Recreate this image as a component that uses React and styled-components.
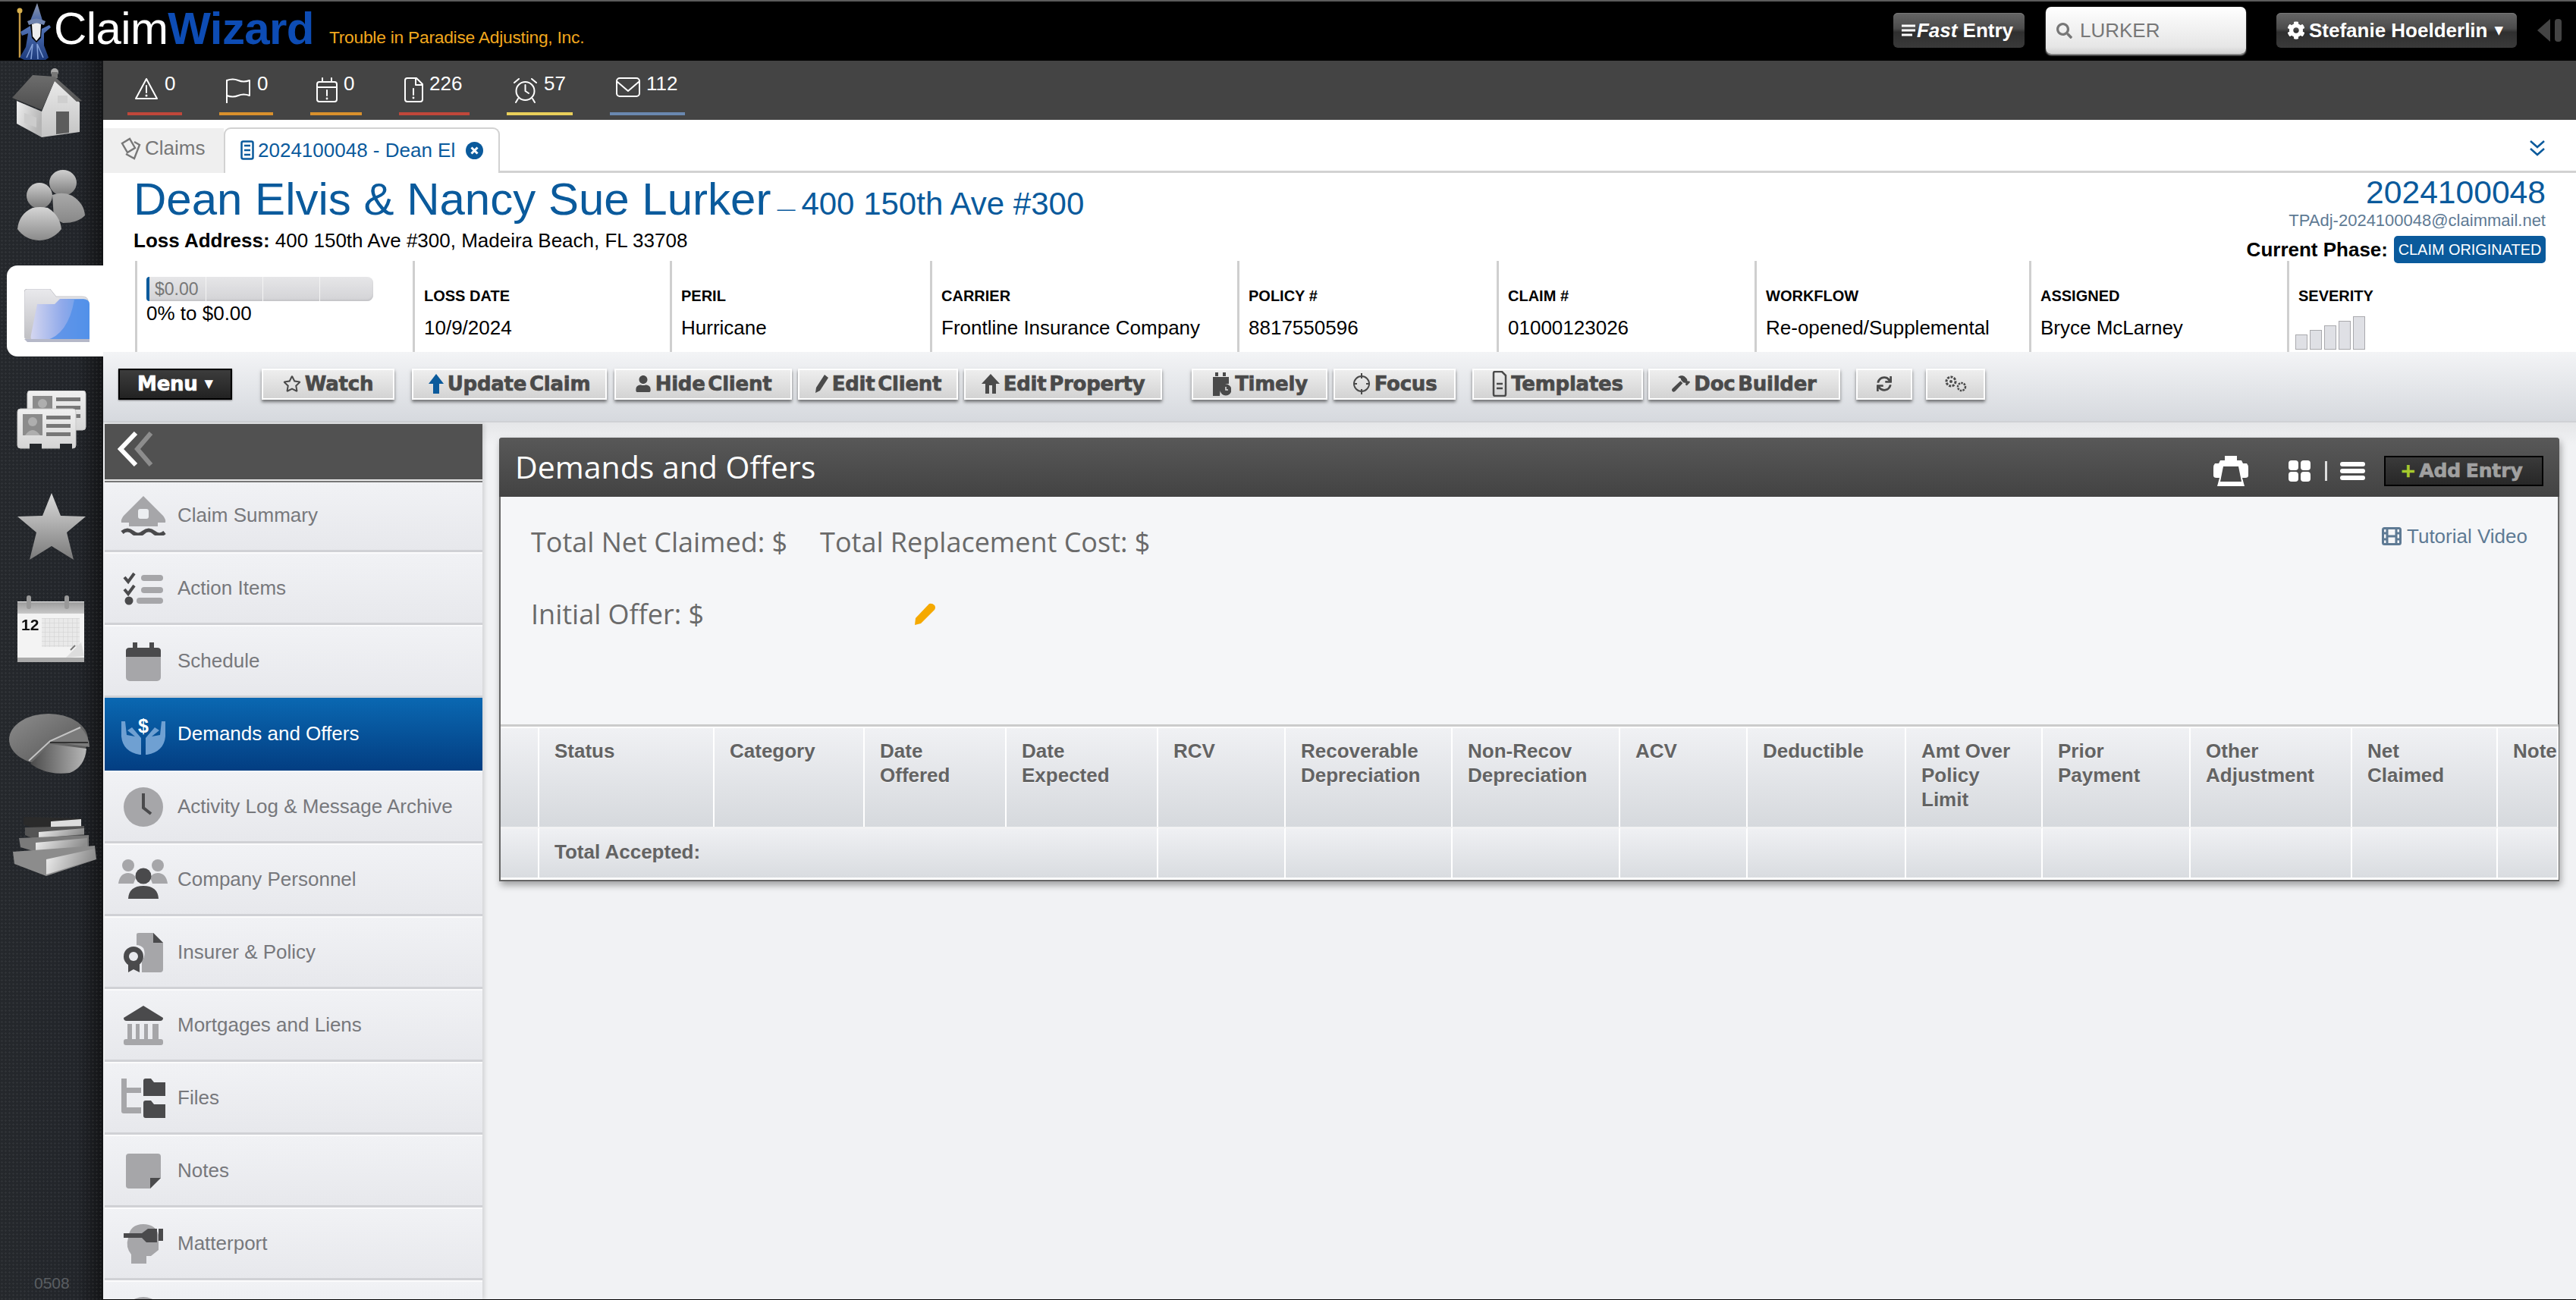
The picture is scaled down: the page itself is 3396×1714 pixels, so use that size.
import React from 'react';
import styled, { createGlobalStyle } from 'styled-components';
import { FaCog, FaSearch, FaRegStar, FaUser, FaHammer, FaSync } from 'react-icons/fa';

const Global = createGlobalStyle`
  html, body { margin: 0; padding: 0; width: 3396px; height: 1714px; overflow: hidden; background: #f2f3f5; }
  * { box-sizing: border-box; }
  #root { font-family: "Liberation Sans", Arial, sans-serif; font-size: 26px; }
`;

const Page = styled.div`display:flex;flex-direction:column;width:3396px;height:1714px;overflow:hidden;`;
const TopBar = styled.header`
  height:80px;background:#000;border-top:2px solid #5c5c5c;display:flex;align-items:center;flex:none;padding-right:18px;
`;
const LogoFigure = styled.div`display:flex;margin-left:22px;margin-top:2px;`;
const LogoText = styled.div`font-size:60px;letter-spacing:-.6px;color:#fff;margin-left:3px;line-height:60px;margin-top:-7px;`;
const LogoBlue = styled.b`color:#0d4cb4;`;
const Company = styled.div`font-size:22.8px;color:#f2a81e;margin-left:20px;margin-top:16px;flex:1;letter-spacing:-.25px;`;
const DarkButton = styled.div`
  display:flex;align-items:center;justify-content:center;gap:${p=>p.$gap ?? 5}px;height:46px;width:${p=>p.$w}px;margin-top:-2px;padding-right:${p=>p.$pr||0}px;
  border-radius:6px;color:#fff;font-weight:700;font-size:26px;
  background:linear-gradient(#666 0%,#4b4b4b 45%,#2f2f2f 55%,#3a3a3a 100%);box-shadow:inset 0 1px 0 #777;
`;
const SearchBox = styled.div`
  display:flex;align-items:center;gap:10px;width:264px;height:62px;margin:-2px 40px 0 28px;padding-left:14px;border-radius:7px;
  background:linear-gradient(#fff,#e6e6e6 85%,#cfcfcf);color:#777;font-size:26px;box-shadow:0 2px 2px #999;
`;
const CollapseGrip = styled.div`display:flex;margin-left:27px;margin-top:-2px;`;
const FastWord = styled.i`font-weight:700;`;

const Body = styled.div`flex:1;display:flex;min-height:0;`;
const Rail = styled.nav`
  width:136px;flex:none;display:flex;flex-direction:column;position:relative;
  background-color:#22262a;
  background-image:radial-gradient(rgba(255,255,255,.055) 1px,transparent 1.4px),linear-gradient(90deg,#25282c 0%,#22252a 75%,#131416 100%);
  background-size:5px 5px,100% 100%;
`;
const RailIcon = styled.div`display:flex;margin-top:${p=>p.$top}px;margin-left:${p=>p.$left}px;filter:blur(.5px);`;
const RailActive = styled.div`
  margin-top:33px;margin-left:9px;width:127px;height:120px;background:#fff;border-radius:14px 0 0 14px;padding:31px 0 0 23px;display:flex;align-items:flex-start;
`;
const RailVersion = styled.div`margin-top:auto;padding:0 0 10px 45px;font-size:21px;color:#5a5e62;`;

const Main = styled.main`flex:1;display:flex;flex-direction:column;min-width:0;border-bottom:1px solid #000;`;
const NotifBar = styled.div`height:78px;flex:none;background:#444;display:flex;gap:49px;padding:18px 0 0 32px;`;
const NotifItem = styled.div`
  height:54px;width:${p=>p.$w}px;border-bottom:4px solid ${p=>p.$c};display:flex;align-items:flex-start;padding-left:${p=>p.$pad}px;gap:8px;color:#fff;font-size:26px;line-height:30px;
`;
const NotifIcon = styled.span`display:flex;margin-top:4px;`;
const NotifCount = styled.span`margin-top:-3px;`;
const TabBar = styled.div`height:70px;flex:none;background:#fff;border-bottom:3px solid #d2d2d2;display:flex;align-items:flex-end;position:relative;`;
const TabClaims = styled.div`
  width:159px;height:59px;background:#efefef;display:flex;align-items:center;gap:5px;padding:0 0 6px 22px;color:#777;font-size:26px;margin-bottom:-3px;
`;
const TabActive = styled.div`
  width:364px;height:60px;margin-bottom:-3px;background:#fff;border:2px solid #d2d2d2;border-bottom:none;border-radius:9px 9px 0 0;display:flex;align-items:center;padding:0 0 2px 20px;gap:5px;color:#0a5a9c;font-size:26px;
`;
const TabClose = styled.span`display:flex;margin-left:9px;`;
const TabMore = styled.span`position:absolute;right:40px;top:26px;display:flex;`;

const Header = styled.section`flex:none;height:236px;background:#fff;display:flex;flex-direction:column;position:relative;z-index:2;`;
const HeaderTop = styled.div`height:116px;display:flex;justify-content:space-between;padding:0 40px 0 40px;`;
const NameLine = styled.div`display:flex;align-items:baseline;color:#0a5a9c;margin-top:6px;line-height:58px;`;
const ClaimName = styled.span`font-size:60px;`;
const SubDash = styled.span`font-size:24px;margin-left:8px;`;
const Sub = styled.span`font-size:42px;margin-left:8px;`;
const LossLine = styled.div`font-size:26px;color:#000;margin-top:-3px;line-height:32px;`;
const ClaimSide = styled.div`text-align:right;display:flex;flex-direction:column;align-items:flex-end;`;
const ClaimNo = styled.div`font-size:42.6px;color:#0a5a9c;line-height:42px;margin-top:4px;`;
const ClaimMail = styled.div`font-size:22px;color:#5e7a94;line-height:28px;margin-top:3px;`;
const PhaseLine = styled.div`display:flex;align-items:center;gap:8px;font-size:26px;font-weight:700;margin-top:6px;`;
const PhaseBadge = styled.span`
  width:200px;height:36px;background:#0a5a9c;border-radius:5px;color:#fff;font-size:19.9px;font-weight:400;display:flex;align-items:center;justify-content:center;white-space:nowrap;
`;
const InfoRow = styled.div`height:124px;margin-left:42px;display:flex;`;
const InfoCell = styled.div`
  width:${p=>p.$w}px;border-left:3px solid #cfcfcf;padding:${p=>p.$pt ?? 34}px 0 0 12px;flex:none;
`;
const InfoLabel = styled.div`font-size:20px;font-weight:700;line-height:24px;color:#000;`;
const InfoValue = styled.div`font-size:26px;line-height:32px;margin-top:14px;color:#000;`;
const Progress = styled.div`
  width:299px;height:32px;display:flex;border-left:4px solid #0a5a9c;border-radius:4px 8px 8px 4px;overflow:hidden;
  background:linear-gradient(#e6e6e8,#d3d3d6);box-shadow:inset 0 -2px 2px #c5c5c8;
`;
const ProgressSeg = styled.div`width:75px;flex:none;border-right:1px solid #f4f4f4;color:#777;font-size:23px;padding-left:7px;line-height:32px;`;
const ProgressText = styled.div`font-size:26px;line-height:30px;margin-top:1px;`;
const SeverityBars = styled.div`display:flex;align-items:flex-end;gap:3px;margin:15px 0 0 -4px;`;
const SeverityBar = styled.span`width:16px;height:${p=>p.$h}px;background:#dfe0e5;border:1px solid #a9a9ad;`;

const Toolbar = styled.div`
  height:93px;flex:none;display:flex;align-items:flex-start;padding:22px 0 0 20px;
  background:linear-gradient(#f3f4f6,#d6d9de);border-bottom:2px solid #cfd1d5;
`;
const ToolButton = styled.div`
  width:${p=>p.$w}px;height:41px;margin-left:${p=>p.$gap||0}px;display:flex;align-items:center;justify-content:center;gap:5px;padding-bottom:2px;
  background:linear-gradient(#eeeeee,#d3d3d3);border:2px solid #fff;box-shadow:0 3px 4px rgba(0,0,0,.5);
  color:#4a4a4a;font-family:"DejaVu Sans",sans-serif;font-weight:700;font-size:26px;-webkit-text-stroke:.7px currentColor;word-spacing:-5px;letter-spacing:-.25px;white-space:nowrap;
`;
const MenuButton = styled(ToolButton)`background:linear-gradient(#3c3c3c,#222);border:2px solid #000;color:#fff;box-shadow:0 1px 2px rgba(0,0,0,.5);`;
const Caret = styled.span`font-size:15px;margin-left:4px;font-family:"DejaVu Sans",sans-serif;-webkit-text-stroke:0;`;

const Content = styled.div`flex:1;display:flex;min-height:0;background:linear-gradient(#e5e6e8 0,#f1f2f4 30px);`;
const SideNav = styled.aside`
  width:498px;margin:2px 0 0 2px;flex:none;display:flex;flex-direction:column;overflow:hidden;box-shadow:3px 0 5px rgba(0,0,0,.12);
`;
const SideHead = styled.div`height:73px;flex:none;background:#515151;position:relative;z-index:1;box-shadow:0 2px 0 #e8e8e8,0 4px 0 #777;display:flex;align-items:flex-start;padding:10px 0 0 17px;`;
const SideRow = styled.div`
  height:96px;flex:none;display:flex;align-items:center;gap:9px;padding-left:15px;font-size:26px;
  color:${p=>p.$on?'#fff':'#77787c'};
  background:${p=>p.$on?'linear-gradient(#0a67b1,#033f83)':'linear-gradient(#f1f2f5,#e7e8ec)'};
  border-top:2px solid ${p=>p.$on?'#0a67b1':'#fbfbfc'};border-bottom:3px solid ${p=>p.$on?'#033f83':'#d0d1d5'};
`;
const SideIcon = styled.span`width:72px;flex:none;display:flex;justify-content:center;`;

const PanelArea = styled.div`flex:1;padding:20px 22px 0 22px;min-width:0;`;
const Panel = styled.section`
  border:2px solid #666;border-top:none;border-radius:4px 4px 0 0;box-shadow:2px 5px 10px rgba(0,0,0,.35);background:#f5f6f8;
`;
const PanelHead = styled.div`
  height:78px;margin:0 -2px;background:linear-gradient(#585858,#434343);border-radius:4px 4px 0 0;display:flex;align-items:center;padding:0 21px 0 21px;color:#fff;
`;
const PanelTitle = styled.h1`margin:-3px 0 0;flex:1;font:400 41px "Open Sans",sans-serif;`;
const HeadTools = styled.div`display:flex;align-items:center;margin-top:10px;`;
const ToolSlot = styled.span`display:flex;margin-left:${p=>p.$gap}px;`;
const AddEntry = styled.div`
  width:210px;height:40px;margin-left:25px;background:linear-gradient(#3a3a3a,#272727);border:2px solid #000;display:flex;align-items:center;justify-content:center;gap:4px;padding:0 6px 2px 0;
  color:#a0a0a0;font-family:"DejaVu Sans",sans-serif;font-weight:700;font-size:25px;-webkit-text-stroke:.7px currentColor;word-spacing:-2px;letter-spacing:-.1px;
`;
const Plus = styled.span`color:#a6ca2e;`;
const Summary = styled.div`height:300px;display:flex;justify-content:space-between;padding:12px 40px 0 40px;`;
const SummaryRow = styled.div`display:flex;align-items:center;height:95px;color:#6a6a6a;font:400 36px "Open Sans",sans-serif;gap:${p=>p.$gap||0}px;`;
const PencilSlot = styled.span`display:flex;margin-left:277px;`;
const Tutorial = styled.div`display:flex;align-items:center;gap:7px;color:#5e7a94;font-size:26px;height:30px;margin-top:25px;`;
const GridTable = styled.table`
  width:2713px;margin-left:0;table-layout:fixed;border-collapse:separate;border-spacing:0;border-top:3px solid #cbcbcb;
`;
const HeadCell = styled.th`
  height:132px;vertical-align:top;text-align:left;padding:14px 4px 0 20px;font-size:26px;line-height:32px;font-weight:700;color:#636363;overflow:hidden;white-space:nowrap;
  background:linear-gradient(#f0f1f4,#d6d9dd);border-top:2px solid #fff;border-right:2px solid #fff;text-shadow:0 1px 1px rgba(255,255,255,.7);
`;
const TotalCell = styled.td`
  height:70px;padding:0 0 4px 20px;font-size:26px;font-weight:700;color:#636363;
  background:linear-gradient(#eff0f3,#d9dce0);border-top:3px solid #f2f2f3;border-right:2px solid #fff;border-bottom:3px solid #fff;
`;

const g = (id, a, b, x2 = 0, y2 = 1) => (
  <linearGradient id={id} x1="0" y1="0" x2={x2} y2={y2}><stop offset="0" stopColor={a}/><stop offset="1" stopColor={b}/></linearGradient>
);

const Wizard = () => (
  <svg width="46" height="76" viewBox="0 0 46 76">
    <defs>{g('wz','#5576b8','#1c3a7c')}{g('wh','#8e98ac','#4d6aa8')}</defs>
    <path d="M4 12 L4 72" stroke="#c59a44" strokeWidth="2.5"/><circle cx="4" cy="10" r="3.5" fill="#d8b04c"/>
    <path d="M27 0 L18 23 L34 23 Z" fill="url(#wh)"/>
    <path d="M14 24 Q26 17 38 24 L36 29 Q26 25 16 29Z" fill="#6f83ad"/>
    <path d="M20 28 Q27 25 32 28 L31 44 L26 50 L21 44Z" fill="#eeeeee"/>
    <path d="M18 30 L5 38 L7 43 L15 40 L12 58 L4 72 L10 75 L38 75 L42 72 L36 56 L36 40 L45 32 L43 29 L33 34 L32 46 L26 52 L20 46Z" fill="url(#wz)"/>
    <path d="M13 72 L21 54 L19 74 M28 74 L27 54 L35 72" stroke="#86a3da" strokeWidth="1.5" fill="none"/>
  </svg>
);

const House = () => (
  <svg width="93" height="91" viewBox="0 0 93 91">
    <defs>{g('hw','#f0f0f0','#b5b5b5',1,.4)}{g('hg','#e9e9e9','#c4c4c4')}{g('hr','#6d6d6d','#4e4e4e')}</defs>
    <circle cx="57" cy="5" r="5" fill="#a8a8a8"/><rect x="53" y="5" width="8" height="8" fill="#777"/>
    <path d="M7 43 L40 57 L40 91 L7 73Z" fill="url(#hw)"/>
    <path d="M40 57 L57 16 L90 45 L90 84 L40 91Z" fill="url(#hg)"/>
    <path d="M1 39 L28 9 L57 11 L93 43 L86 44 L57 17 L40 55Z" fill="url(#hr)"/>
    <path d="M59 57 H76 V85 L59 87Z" fill="#5c5c5c"/>
    <path d="M17 59 L33 65 V78 L17 72Z" fill="#ccc"/>
    <path d="M61 36 L74 36 L74 46 L61 46Z" fill="#cfcfcf"/>
  </svg>
);
const People = () => (
  <svg width="89" height="93" viewBox="0 0 89 93">
    <defs>{g('pa','#cfcfcf','#7a7a7a')}{g('pb','#a9a9a9','#888')}{g('pc','#d5d5d5','#8a8a8a')}</defs>
    <ellipse cx="60" cy="17" rx="18" ry="17" fill="url(#pa)"/>
    <path d="M46 33 Q60 28 72 34 Q88 44 89 60 Q80 70 60 70 L48 64Z" fill="url(#pb)"/>
    <ellipse cx="29" cy="34" rx="17" ry="17" fill="url(#pa)"/>
    <path d="M0 78 Q2 58 20 50 Q30 48 40 50 Q56 60 58 78 Q46 93 28 93 Q10 92 0 78Z" fill="url(#pc)"/>
  </svg>
);
const Folder = () => (
  <svg width="86" height="70" viewBox="0 0 86 70">
    <defs>{g('fb','#e9e9ec','#c0c0c4')}
      <linearGradient id="ff" x1="0" y1="0" x2="1" y2="0"><stop offset="0" stopColor="#d4d6f0"/><stop offset=".55" stopColor="#8fa9ea"/><stop offset="1" stopColor="#5c9bea"/></linearGradient></defs>
    <path d="M0 4 Q0 0 4 0 H34 L42 10 H76 Q84 10 84 16 V66 H4 Q0 66 0 62Z" fill="url(#fb)" stroke="#c6c6cb"/>
    <path d="M17 20 H40 L47 13 H78 Q86 14 86 20 V68 H14 Q7 68 9 60Z" fill="url(#ff)"/>
    <path d="M28 68 Q58 60 66 14 H78 Q86 14 86 20 V68Z" fill="#4f8ee8" opacity=".75"/>
    <path d="M0 66 H86 V70 H4Z" fill="#b5b8c8"/>
  </svg>
);
const Cards = () => {
  const card = (x, y) => (
    <g transform={`translate(${x} ${y})`}>
      <rect width="77" height="52" rx="4" fill="url(#cc)" stroke="#c9c9c9"/>
      <rect x="7" y="7" width="26" height="28" fill="#8b8b8b"/><circle cx="20" cy="17" r="6" fill="#aeaeae"/><path d="M10 35 Q20 21 30 35Z" fill="#aeaeae"/>
      <rect x="38" y="9" width="32" height="5" fill="#777"/><rect x="38" y="20" width="32" height="5" fill="#777"/><rect x="38" y="31" width="32" height="5" fill="#777"/>
    </g>
  );
  return (
    <svg width="92" height="78" viewBox="0 0 92 78">
      <defs>{g('cc','#f0f0f0','#d5d5d5')}</defs>
      {card(14,0)}{card(1,24)}
      <rect x="17" y="70" width="16" height="8" fill="#24272b"/><rect x="57" y="70" width="16" height="8" fill="#24272b"/>
    </svg>
  );
};
const StarIcon = () => (
  <svg width="90" height="88" viewBox="0 0 90 88">
    <defs>{g('st','#dcdcdc','#7a7a7a')}</defs>
    <path d="M45 0 L57 30 L90 31 L65 52 L74 88 L45 70 L16 88 L25 52 L0 31 L33 30Z" fill="url(#st)"/>
  </svg>
);
const Calendar = () => (
  <svg width="90" height="88" viewBox="0 0 90 88">
    <defs>{g('ca','#9c9c9c','#c8c8c8')}
      <pattern id="cg" width="6" height="6" patternUnits="userSpaceOnUse"><rect width="6" height="6" fill="#e9e9e9"/><path d="M0 0H6M0 0V6" stroke="#cfcfcf"/></pattern></defs>
    <rect x="0" y="8" width="88" height="78" fill="#f3f3f3"/>
    <rect x="0" y="9" width="88" height="15" fill="url(#ca)"/>
    <rect x="12" y="0" width="6" height="18" rx="3" fill="#999"/><rect x="62" y="0" width="6" height="18" rx="3" fill="#999"/>
    <text x="5" y="46" fontFamily="Liberation Sans, sans-serif" fontWeight="700" fontSize="21" fill="#111">12</text>
    <rect x="32" y="30" width="50" height="38" fill="url(#cg)"/>
    <path d="M64 82 L84 62 L88 80Z" fill="#ddd"/><path d="M70 72 L76 66" stroke="#777" strokeWidth="2"/>
    <rect x="0" y="82" width="88" height="6" fill="#aaa"/>
  </svg>
);
const Pie = () => (
  <svg width="106" height="82" viewBox="0 0 106 82">
    <defs>{g('pi','#8d8d8d','#4f4f4f',1,1)}{g('pj','#4a4a4a','#b8b8b8',1,0)}</defs>
    <ellipse cx="52" cy="34" rx="52" ry="34" fill="url(#pi)"/>
    <path d="M28 66 Q50 82 80 78 Q100 70 102 46 L54 40Z" fill="url(#pj)"/>
    <path d="M54 36 L94 18 Q106 30 106 44Z" fill="#7b7b7b"/>
    <path d="M26 62 L54 36 L94 18" stroke="#c4c4c4" strokeWidth="2" fill="none"/><path d="M54 38 L104 38" stroke="#333" strokeWidth="2"/>
  </svg>
);
const Books = () => (
  <svg width="110" height="82" viewBox="0 0 110 82">
    <defs>{g('bk','#f0f0f0','#8d8d8d',1,.2)}</defs>
    <path d="M14 4 L90 6 V18 L30 20 L14 14Z" fill="#2a2a2a"/><path d="M50 10 L90 7 V17 L50 20Z" fill="#ddd"/>
    <path d="M16 18 L94 16 V28 L30 34 L16 28Z" fill="#555"/><path d="M34 24 L94 19 V27 L34 32Z" fill="url(#bk)"/>
    <path d="M8 32 L100 28 V44 L30 50 L10 44Z" fill="#7a7a7a"/><path d="M30 38 L98 32 V44 L30 50Z" fill="url(#bk)"/>
    <path d="M0 50 L108 42 L110 60 L44 82 L2 66Z" fill="#8c8c8c"/><path d="M44 60 L108 46 L108 60 L44 80Z" fill="url(#bk)"/>
  </svg>
);

const line = { fill:'none', stroke:'#fff', strokeWidth:2, strokeLinejoin:'round', strokeLinecap:'round' };
const IconAlert = () => <svg width="32" height="30" viewBox="0 0 32 30"><path {...line} d="M16 2 L30 28 H2Z M16 11 V20"/><circle cx="16" cy="24" r="1.5" fill="#fff"/></svg>;
const IconFlag = () => <svg width="34" height="34" viewBox="0 0 34 34"><path {...line} d="M2 4 Q10 1 17 4 T32 4 V24 Q24 21 17 24 T2 24 V33"/><path {...line} d="M2 4 V33"/></svg>;
const IconCal = () => <svg width="28" height="33" viewBox="0 0 28 33"><rect {...line} x="1" y="6" width="26" height="26" rx="3"/><path {...line} d="M1 13 H27 M8 1 V6 M20 1 V6 M14 17 V24"/><circle cx="14" cy="28" r="1.4" fill="#fff"/></svg>;
const IconFile = () => <svg width="25" height="33" viewBox="0 0 25 33"><path {...line} d="M1 4 Q1 1 4 1 H16 L24 9 V29 Q24 32 21 32 H4 Q1 32 1 29Z M15 1 V10 H24 M12 15 V23"/><circle cx="12" cy="27" r="1.4" fill="#fff"/></svg>;
const IconAlarm = () => <svg width="33" height="34" viewBox="0 0 33 34"><circle {...line} cx="16.5" cy="18" r="12"/><path {...line} d="M16.5 10 V18 L21 21 M2 7 L8 2 M31 7 L25 2 M7 28 L4 33 M26 28 L29 33"/></svg>;
const IconMail = () => <svg width="32" height="26" viewBox="0 0 32 26"><rect {...line} x="1" y="1" width="30" height="24" rx="4"/><path {...line} d="M2 6 L16 18 L30 6"/></svg>;

const IconClaims = () => <svg width="28" height="30" viewBox="0 0 28 30"><path fill="none" stroke="#777" strokeWidth="2.4" d="M3 8 L13 2 L20 14 L10 20Z M19 6 L26 10 L19 28 L8 22"/></svg>;
const IconTabDoc = () => <svg width="18" height="26" viewBox="0 0 18 26"><rect x="1.5" y="1.5" width="15" height="23" rx="2" fill="none" stroke="#0a5a9c" strokeWidth="2.5"/><path d="M5 7 H13 M5 13 H13 M5 19 H13" stroke="#0a5a9c" strokeWidth="2.5"/></svg>;
const IconClose = () => <svg width="23" height="23" viewBox="0 0 23 23"><circle cx="11.5" cy="11.5" r="11.5" fill="#0a5a9c"/><path d="M7.5 7.5 L15.5 15.5 M15.5 7.5 L7.5 15.5" stroke="#fff" strokeWidth="3"/></svg>;
const IconDouble = () => <svg width="22" height="22" viewBox="0 0 22 22"><path d="M2 2 L11 10 L20 2 M2 12 L11 20 L20 12" fill="none" stroke="#0a5a9c" strokeWidth="2.5"/></svg>;
const IconBars = () => <svg width="18" height="18" viewBox="0 0 18 18"><path d="M0 3H18M0 9H18M0 15H14" stroke="#fff" strokeWidth="3"/></svg>;
const IconGrip = () => <svg width="33" height="30" viewBox="0 0 33 30"><path d="M0 15 L17 0 V30Z" fill="#444"/><rect x="23" y="0" width="9" height="30" rx="4" fill="#444"/></svg>;

const gray = '#4a4a4a';
const IconUp = () => <svg width="20" height="26" viewBox="0 0 20 26"><path d="M10 0 L20 13 H14 V26 H6 V13 H0Z" fill="#0a5a9c"/></svg>;
const IconPen = () => <svg width="18" height="26" viewBox="0 0 18 26"><path d="M13 1 L18 5 L7 22 L1 25 L2 18Z" fill={gray}/></svg>;
const IconHome = () => <svg width="24" height="26" viewBox="0 0 24 26"><path d="M12 0 L24 13 H19 V26 H14 V15 H10 V26 H5 V13 H0Z" fill={gray}/></svg>;
const IconTimely = () => <svg width="26" height="34" viewBox="0 0 26 34"><path d="M2 8 H23 V17 Q11 17 11 33 H2Z M5 2 H9 V7 H5Z M15 2 H19 V7 H15Z" fill={gray}/><circle cx="19" cy="25" r="7.5" fill={gray}/><path d="M19 21 V25 H22" stroke="#ddd" strokeWidth="1.5" fill="none"/></svg>;
const IconTarget = () => <svg width="24" height="32" viewBox="0 0 24 32"><circle cx="12" cy="16" r="10" fill="none" stroke={gray} strokeWidth="2"/><path d="M12 2 V9 M12 23 V30 M1 16 H6 M18 16 H23" stroke={gray} strokeWidth="2"/></svg>;
const IconTemplate = () => <svg width="20" height="34" viewBox="0 0 20 34"><path d="M2 3 Q2 1 4 1 H13 L18 6 V31 Q18 33 16 33 H4 Q2 33 2 31Z" fill="none" stroke={gray} strokeWidth="2.5"/><path d="M6 17 H14 M6 23 H14" stroke={gray} strokeWidth="2.5"/></svg>;
const IconCogs = () => <svg width="32" height="24" viewBox="0 0 32 24"><circle cx="10" cy="9" r="6" fill="none" stroke={gray} strokeWidth="3" strokeDasharray="3 1.5"/><circle cx="10" cy="9" r="2" fill={gray}/><circle cx="24" cy="16" r="5" fill="none" stroke={gray} strokeWidth="2.5" strokeDasharray="2.5 1.2"/></svg>;

const IconPrint = () => <svg width="46" height="40" viewBox="0 0 46 40"><path d="M15 0 H31 V6 H37 L39 10 H44 Q46 12 46 16 V26 Q46 29 42 29 H38 L41 40 H5 L8 29 H4 Q0 29 0 26 V16 Q0 12 2 10 H7 L9 6 H15Z" fill="#fff"/><path d="M13 14 H33 L37 34 H9Z" fill="#484848"/></svg>;
const IconGrid = () => <svg width="29" height="28" viewBox="0 0 29 28"><rect width="13" height="13" rx="4" fill="#fff"/><rect x="16" width="13" height="13" rx="4" fill="#fff"/><rect y="15" width="13" height="13" rx="4" fill="#fff"/><rect x="16" y="15" width="13" height="13" rx="4" fill="#fff"/></svg>;
const IconDivider = () => <svg width="3" height="26" viewBox="0 0 3 26"><rect width="3" height="26" fill="#ddd"/></svg>;
const IconList = () => <svg width="33" height="24" viewBox="0 0 33 24"><rect width="33" height="6" rx="3" fill="#fff"/><rect y="9" width="33" height="6" rx="3" fill="#fff"/><rect y="18" width="33" height="6" rx="3" fill="#fff"/></svg>;
const IconPencil = () => <svg width="29" height="29" viewBox="0 0 29 29"><path d="M20 1 Q24 0 27 3 Q29 6 27 9 L9 27 L1 29 L2 20Z" fill="#f5a900"/></svg>;
const IconFilm = () => <svg width="26" height="24" viewBox="0 0 26 24"><rect x="1.5" y="1.5" width="23" height="21" rx="2" fill="none" stroke="#5e7a94" strokeWidth="3"/><path d="M7 2 V22 M19 2 V22 M2 8 H7 M2 16 H7 M19 8 H24 M19 16 H24 M7 12 H19" stroke="#5e7a94" strokeWidth="3"/></svg>;

const IconChevrons = () => <svg width="48" height="46" viewBox="0 0 48 46"><path d="M24 2 L4 23 L24 44" fill="none" stroke="#fff" strokeWidth="6"/><path d="M44 2 L26 23 L44 44" fill="none" stroke="#8d8d8d" strokeWidth="6"/></svg>;

const A = '#a6a6a9', D = '#4a4a4c';
const SumIcon = () => <svg width="60" height="52" viewBox="0 0 60 52"><path d="M30 0 L56 26 Q60 31 59 35 H49 V40 H11 V35 H1 Q0 31 4 26Z" fill={A}/><rect x="23" y="17" width="14" height="13" rx="3" fill="#eceef1"/><path d="M2 48 q7 -6 14 0 t14 0 t14 0 t14 0" fill="none" stroke={D} strokeWidth="5"/></svg>;
const ActIcon = () => <svg width="54" height="44" viewBox="0 0 54 44"><path d="M2 7 L7 13 L15 2 M2 23 L7 29 L15 18" fill="none" stroke={D} strokeWidth="4"/><circle cx="8" cy="38" r="5.5" fill={D}/><rect x="24" y="4" width="29" height="8" rx="4" fill={A}/><rect x="24" y="20" width="29" height="8" rx="4" fill={A}/><rect x="18" y="34" width="35" height="8" rx="4" fill={A}/></svg>;
const SchedIcon = () => <svg width="46" height="52" viewBox="0 0 46 52"><rect y="8" width="46" height="44" rx="5" fill={A}/><path d="M0 20 V12 Q0 8 5 8 H9 V1 H15 V8 H31 V1 H37 V8 H41 Q46 8 46 12 V20Z" fill={D}/></svg>;
const OfferIcon = () => <svg width="66" height="54" viewBox="0 0 66 54"><path d="M28 54 Q6 50 4 30 L4 10 L9 10 L11 28 L22 30 L12 22 L18 18 L30 32 L30 54Z M38 54 Q60 50 62 30 L62 10 L57 10 L55 28 L44 30 L54 22 L48 18 L36 32 L36 54Z" fill="#6fa0d2"/><text x="33" y="25" textAnchor="middle" fontFamily="Liberation Sans, sans-serif" fontWeight="700" fontSize="25" fill="#fff">$</text></svg>;
const ClockIcon = () => <svg width="52" height="52" viewBox="0 0 52 52"><circle cx="26" cy="26" r="26" fill={A}/><path d="M26 8 V27 L36 35" fill="none" stroke={D} strokeWidth="4"/></svg>;
const StaffIcon = () => <svg width="66" height="54" viewBox="0 0 66 54"><circle cx="13" cy="8" r="8" fill={A}/><circle cx="52" cy="8" r="8" fill={A}/><path d="M0 32 Q2 18 13 18 Q20 18 23 24 L20 32Z M65 32 Q63 18 52 18 Q45 18 42 24 L45 32Z" fill={A}/><circle cx="33" cy="22" r="10.5" fill={D}/><path d="M13 52 Q14 35 33 35 Q52 35 53 52Z" fill={D}/></svg>;
const InsIcon = () => <svg width="52" height="52" viewBox="0 0 52 52"><path d="M17 2 Q17 0 20 0 H39 L52 13 V48 Q52 52 48 52 H24 L24 38 Q30 28 26 20 Q22 16 17 16Z" fill={A}/><path d="M39 0 L52 13 H39Z" fill={D}/><circle cx="13" cy="31" r="13" fill={D}/><circle cx="13" cy="31" r="6" fill="#e9eaee"/><path d="M6 40 H21 V52 L13 48 L6 52Z" fill={D}/></svg>;
const BankIcon = () => <svg width="52" height="52" viewBox="0 0 52 52"><path d="M26 0 L52 16 Q52 20 48 20 H4 Q0 20 0 16Z" fill={D}/><path d="M5 24 H11 V44 H5Z M16 24 H21 V44 H16Z M27 24 H32 V44 H27Z M38 24 H46 V44 H38Z" fill={A}/><rect y="44" width="52" height="8" rx="3" fill={A}/></svg>;
const FilesIcon = () => <svg width="58" height="52" viewBox="0 0 58 52"><path d="M0 0 H7 V12 H26 V19 H7 V38 H26 V46 H3 Q0 46 0 43Z" fill={A}/><path d="M29 3 Q29 0 32 0 H39 L43 5 H58 V23 H29Z M29 32 Q29 29 32 29 H39 L43 34 H58 V52 H32 Q29 52 29 49Z" fill={D}/></svg>;
const NoteIcon = () => <svg width="46" height="46" viewBox="0 0 46 46"><path d="M4 0 H42 Q46 0 46 4 V32 L32 46 H4 Q0 46 0 42 V4 Q0 0 4 0Z" fill={A}/><path d="M32 46 V32 H46Z" fill={D}/></svg>;
const VrIcon = () => <svg width="52" height="52" viewBox="0 0 52 52"><path d="M6 18 Q8 0 26 0 Q42 0 46 14 L46 34 L36 42 H30 V52 H10 V40 Q2 30 6 18Z" fill={A}/><path d="M0 12 H24 L32 6 H44 V24 H30 L24 18 H0Z" fill={D}/><rect x="46" y="6" width="6" height="16" fill={D}/></svg>;
const NextIcon = () => <svg width="52" height="52" viewBox="0 0 52 52"><circle cx="26" cy="26" r="26" fill={A}/></svg>;

const notifs = [
  [72,9,'#c0473a',<IconAlert/>,'0'],[71,8,'#d9902c',<IconFlag/>,'0'],[68,8,'#d9902c',<IconCal/>,'0'],
  [93,7,'#c0473a',<IconFile/>,'226'],[87,8,'#e9cf5a',<IconAlarm/>,'57'],[99,8,'#6a88b0',<IconMail/>,'112'],
];
const infos = [
  [339,'LOSS DATE','10/9/2024'],[343,'PERIL','Hurricane'],[405,'CARRIER','Frontline Insurance Company'],[342,'POLICY #','8817550596'],
  [340,'CLAIM #','01000123026'],[362,'WORKFLOW','Re-opened/Supplemental'],[340,'ASSIGNED','Bryce McLarney'],
];
const menu = [
  [<SumIcon/>,'Claim Summary'],[<ActIcon/>,'Action Items'],[<SchedIcon/>,'Schedule'],[<OfferIcon/>,'Demands and Offers',true],
  [<ClockIcon/>,'Activity Log & Message Archive'],[<StaffIcon/>,'Company Personnel'],[<InsIcon/>,'Insurer & Policy'],
  [<BankIcon/>,'Mortgages and Liens'],[<FilesIcon/>,'Files'],[<NoteIcon/>,'Notes'],[<VrIcon/>,'Matterport'],[<NextIcon/>,''],
];
const tools = [
  [175,39,<FaRegStar size={24}/>,'Watch'],[257,23,<IconUp/>,'Update Claim'],[234,10,<FaUser size={22}/>,'Hide Client'],
  [211,8,<IconPen/>,'Edit Client'],[261,8,<IconHome/>,'Edit Property'],[179,39,<IconTimely/>,'Timely'],[161,8,<IconTarget/>,'Focus'],
  [225,22,<IconTemplate/>,'Templates'],[253,7,<FaHammer size={24}/>,'Doc Builder'],[74,21,<FaSync size={20}/>,''],[78,18,<IconCogs/>,''],
];
const cols = [51,231,198,187,200,168,220,221,168,209,180,195,213,192,80];
const heads = ['', 'Status','Category',<>Date<br/>Offered</>,<>Date<br/>Expected</>,'RCV',<>Recoverable<br/>Depreciation</>,<>Non-Recov<br/>Depreciation</>,'ACV','Deductible',<>Amt Over<br/>Policy<br/>Limit</>,<>Prior<br/>Payment</>,<>Other<br/>Adjustment</>,<>Net<br/>Claimed</>,'Notes'];

export default function App() {
  return (
    <Page>
      <Global/>
      <TopBar>
        <LogoFigure><Wizard/></LogoFigure>
        <LogoText>Claim<LogoBlue>Wizard</LogoBlue></LogoText>
        <Company>Trouble in Paradise Adjusting, Inc.</Company>
        <DarkButton $w={173} $gap={2} $pr={4}><IconBars/><span><FastWord>Fast</FastWord> Entry</span></DarkButton>
        <SearchBox><FaSearch size={21} color="#777"/>LURKER</SearchBox>
        <DarkButton $w={317} $pr={4}><FaCog size={24}/>Stefanie Hoelderlin<Caret>▼</Caret></DarkButton>
        <CollapseGrip><IconGrip/></CollapseGrip>
      </TopBar>
      <Body>
        <Rail>
          <RailIcon $top={10} $left={15}><House/></RailIcon>
          <RailIcon $top={43} $left={23}><People/></RailIcon>
          <RailActive><Folder/></RailActive>
          <RailIcon $top={45} $left={22}><Cards/></RailIcon>
          <RailIcon $top={57} $left={23}><StarIcon/></RailIcon>
          <RailIcon $top={47} $left={23}><Calendar/></RailIcon>
          <RailIcon $top={68} $left={12}><Pie/></RailIcon>
          <RailIcon $top={50} $left={17}><Books/></RailIcon>
          <RailVersion>0508</RailVersion>
        </Rail>
        <Main>
          <NotifBar>
            {notifs.map(([w,pad,c,icon,n],i)=>(
              <NotifItem key={i} $w={w} $pad={pad} $c={c}><NotifIcon>{icon}</NotifIcon><NotifCount>{n}</NotifCount></NotifItem>
            ))}
          </NotifBar>
          <TabBar>
            <TabClaims><IconClaims/>Claims</TabClaims>
            <TabActive><IconTabDoc/>2024100048 - Dean El<TabClose><IconClose/></TabClose></TabActive>
            <TabMore><IconDouble/></TabMore>
          </TabBar>
          <Header>
            <HeaderTop>
              <div>
                <NameLine><ClaimName>Dean Elvis &amp; Nancy Sue Lurker</ClaimName><SubDash>—</SubDash><Sub>400 150th Ave #300</Sub></NameLine>
                <LossLine><b>Loss Address:</b> 400 150th Ave #300, Madeira Beach, FL 33708</LossLine>
              </div>
              <ClaimSide>
                <ClaimNo>2024100048</ClaimNo>
                <ClaimMail>TPAdj-2024100048@claimmail.net</ClaimMail>
                <PhaseLine>Current Phase: <PhaseBadge>CLAIM ORIGINATED</PhaseBadge></PhaseLine>
              </ClaimSide>
            </HeaderTop>
            <InfoRow>
              <InfoCell $w={366} $pt={21}>
                <Progress><ProgressSeg>$0.00</ProgressSeg><ProgressSeg/><ProgressSeg/><ProgressSeg/></Progress>
                <ProgressText>0% to $0.00</ProgressText>
              </InfoCell>
              {infos.map(([w,l,v])=>(
                <InfoCell key={l} $w={w}><InfoLabel>{l}</InfoLabel><InfoValue>{v}</InfoValue></InfoCell>
              ))}
              <InfoCell $w={300}>
                <InfoLabel>SEVERITY</InfoLabel>
                <SeverityBars>{[20,26,32,38,44].map(h=><SeverityBar key={h} $h={h}/>)}</SeverityBars>
              </InfoCell>
            </InfoRow>
          </Header>
          <Toolbar>
            <MenuButton $w={150}>Menu<Caret>▼</Caret></MenuButton>
            {tools.map(([w,gap,icon,t],i)=>(
              <ToolButton key={i} $w={w} $gap={gap}>{icon}{t}</ToolButton>
            ))}
          </Toolbar>
          <Content>
            <SideNav>
              <SideHead><IconChevrons/></SideHead>
              {menu.map(([icon,t,on],i)=>(
                <SideRow key={i} $on={on}><SideIcon>{icon}</SideIcon>{t}</SideRow>
              ))}
            </SideNav>
            <PanelArea>
              <Panel>
                <PanelHead>
                  <PanelTitle>Demands and Offers</PanelTitle>
                  <HeadTools>
                    <ToolSlot $gap={0}><IconPrint/></ToolSlot>
                    <ToolSlot $gap={53}><IconGrid/></ToolSlot>
                    <ToolSlot $gap={19}><IconDivider/></ToolSlot>
                    <ToolSlot $gap={17}><IconList/></ToolSlot>
                    <AddEntry><Plus>+</Plus>Add Entry</AddEntry>
                  </HeadTools>
                </PanelHead>
                <Summary>
                  <div>
                    <SummaryRow $gap={43}><span>Total Net Claimed: $</span><span>Total Replacement Cost: $</span></SummaryRow>
                    <SummaryRow><span>Initial Offer: $</span><PencilSlot><IconPencil/></PencilSlot></SummaryRow>
                  </div>
                  <Tutorial><IconFilm/>Tutorial Video</Tutorial>
                </Summary>
                <GridTable>
                  <colgroup>{cols.map((w,i)=><col key={i} width={w}/>)}</colgroup>
                  <thead><tr>{heads.map((h,i)=><HeadCell key={i}>{h}</HeadCell>)}</tr></thead>
                  <tbody><tr>
                    <TotalCell/>
                    <TotalCell colSpan={4}>Total Accepted:</TotalCell>
                    {cols.slice(5).map((w,i)=><TotalCell key={i}/>)}
                  </tr></tbody>
                </GridTable>
              </Panel>
            </PanelArea>
          </Content>
        </Main>
      </Body>
    </Page>
  );
}
